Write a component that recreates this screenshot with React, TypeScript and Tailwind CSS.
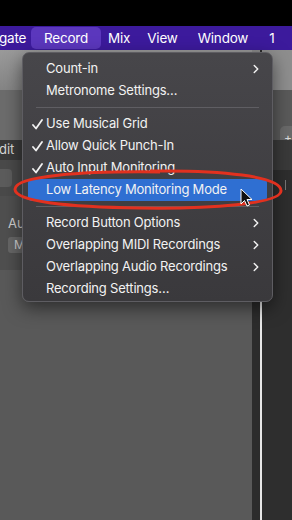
import { ChevronRight } from 'lucide-react';

type Item = { label: string; check?: boolean; sub?: boolean; active?: boolean } | 'sep';

const items: Item[] = [
  { label: 'Count-in', sub: true },
  { label: 'Metronome Settings…' },
  'sep',
  { label: 'Use Musical Grid', check: true },
  { label: 'Allow Quick Punch-In', check: true },
  { label: 'Auto Input Monitoring', check: true },
  { label: 'Low Latency Monitoring Mode', active: true },
  'sep',
  { label: 'Record Button Options', sub: true },
  { label: 'Overlapping MIDI Recordings', sub: true },
  { label: 'Overlapping Audio Recordings', sub: true },
  { label: 'Recording Settings…' },
];

const font = { fontFamily: 'Inter, "Liberation Sans", sans-serif' };

export default function App() {
  return (
    <div className="relative w-[292px] h-[520px] overflow-hidden bg-black" style={font}>
      {/* Top black strip */}
      <div className="h-[26px] bg-black" />

      {/* Menu bar */}
      <div className="h-[24px] bg-[#3c1a9c] flex items-center text-[13.5px] tracking-[-0.2px] text-white">
        <span className="w-[32px] -ml-[1px]">gate</span>
        <span className="h-[22px] w-[70px] rounded-[5px] bg-[#5b37bd] flex items-center pl-[13px]">Record</span>
        <span className="ml-[7px]">Mix</span>
        <span className="ml-[17px]">View</span>
        <span className="ml-[20px]">Window</span>
        <span className="ml-[21px]">1</span>
      </div>

      {/* Background app */}
      <div className="flex h-[470px]">
        <div className="w-[252px] flex flex-col">
          <div className="h-[40px] bg-gradient-to-b from-[#9a9a9a] to-[#858585]" />
          <div className="h-[50px] bg-[#6c6c6c]" />
          <div className="h-[20px] bg-[#3a3a3a] flex items-center text-[13px] text-[#d8d8d8]">
            <span className="-ml-[1px]">dit</span>
          </div>
          <div className="h-[36px] bg-[#4a4a4a] flex items-center">
            <div className="w-[12px] h-[18px] rounded-r-[4px] bg-[#5c5c5c]" />
          </div>
          <div className="h-[74px] bg-[#4f4f4f] flex flex-col pt-[18px] text-[13px] text-[#cfcfcf]">
            <span className="ml-[8px]">Au</span>
            <div className="mt-[3px] ml-[8px] w-[16px] h-[16px] rounded-[3px] bg-[#666] flex items-center pl-[6px] text-[12px]">M</div>
          </div>
          <div className="flex-1 bg-[#595959]" />
        </div>
        <div className="w-[8px] flex flex-col">
          <div className="h-[90px] bg-[#8a8a8a]" />
          <div className="flex-1 bg-[#2c2c2c]" />
        </div>
        <div className="w-[2px] flex flex-col">
          <div className="h-[220px] bg-[#2c2c2c]" />
          <div className="flex-1 bg-[#e8e8e8]" />
        </div>
        <div className="flex-1 flex flex-col">
          <div className="h-[40px] bg-[#8e8e8e]" />
          <div className="h-[50px] bg-[#5a5a5a] flex items-end justify-end">
            <div className="w-[12px] h-[24px] rounded-l-[5px] bg-[#6a6a6a] flex items-center pl-[4px] text-[#ddd] text-[12px] mb-[-10px]">+</div>
          </div>
          <div className="h-[30px] bg-[#3a3a3a]" />
          <div className="flex-1 bg-[#2e2e2e] flex justify-end pr-[6px]">
            <div className="w-[1px] h-[10px] mt-[10px] bg-[#777]" />
          </div>
        </div>
      </div>

      {/* Dropdown menu */}
      <div className="absolute left-[22px] top-[52px] w-[251px] rounded-[7px] border border-[#5e5d62] bg-gradient-to-b from-[#47464a] to-[#3a393c] px-[5px] pt-[5px] pb-[1px] shadow-[0_6px_18px_rgba(0,0,0,0.5)] text-[13px] tracking-[-0.2px] text-[#f2f2f2]">
        {items.map((it, i) =>
          it === 'sep' ? (
            <div key={i} className="h-[11px] flex items-center px-[8px]">
              <div className="h-px w-full bg-[#5f5e63]" />
            </div>
          ) : (
            <div
              key={i}
              className={`h-[22px] flex items-center rounded-[4px] ${it.active ? 'bg-[#2f6fd2]' : ''}`}
            >
              <span className="w-[18px] pl-[4px] flex items-center">
                {it.check && (
                  <svg width="11" height="11" viewBox="0 0 11 11">
                    <path d="M1 6 L4 9.5 L10 1" fill="none" stroke="#f2f2f2" strokeWidth="1.8" strokeLinecap="round" strokeLinejoin="round" />
                  </svg>
                )}
              </span>
              <span className="flex-1">{it.label}</span>
              {it.sub && <ChevronRight className="w-[14px] h-[14px] mr-[4px]" strokeWidth={2.5} />}
            </div>
          )
        )}
      </div>

      {/* Red annotation ellipse and cursor */}
      <svg className="absolute left-0 top-0" width="292" height="520" viewBox="0 0 292 520">
        <path
          d="M150 171 C 220 170, 282 176, 281 191 C 280 204, 210 209, 140 208 C 70 207, 14 202, 15 189 C 16 176, 80 171, 160 172"
          fill="none"
          stroke="#e2311f"
          strokeWidth="3"
        />
        <path
          d="M241 189 L241 204 L244.5 200.5 L247 206 L249.5 205 L247 199.5 L252 199.5 Z"
          fill="#111"
          stroke="#fff"
          strokeWidth="1"
          strokeLinejoin="round"
        />
      </svg>
    </div>
  );
}
